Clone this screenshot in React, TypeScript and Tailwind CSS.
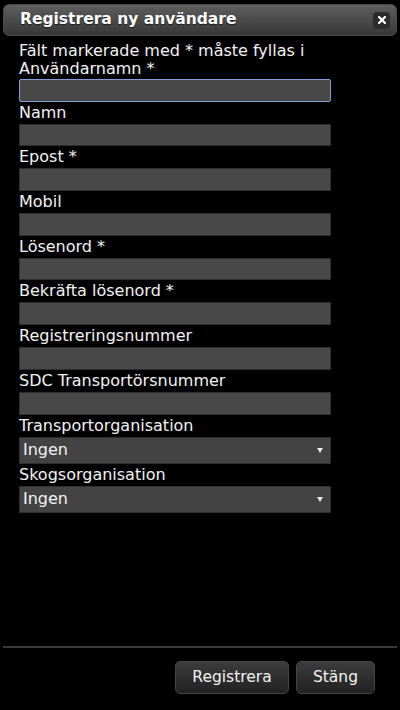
import React from "react";

const font = { fontFamily: '"DejaVu Sans", Verdana, sans-serif' };

function Label({ text, first }: { text: string; first?: boolean }) {
  return (
    <div
      className={`text-[16px] leading-[17px] text-[#f2f2f2] ${first ? "pb-[2px]" : "pt-[2px] pb-[3px]"}`}
    >
      {text}
    </div>
  );
}

function Input({ focused }: { focused?: boolean }) {
  return (
    <div
      className={`h-[22.7px] w-[312px] bg-[#484848] border ${
        focused ? "border-[#7f9fd6] rounded-[2px]" : "border-[#2e2e2e]"
      }`}
    />
  );
}

function Select() {
  return (
    <div className="h-[27px] w-[312px] bg-[#434343] border border-[#2e2e2e] flex items-center justify-between pl-[3px] pr-[7px]">
      <span className="text-[16px] text-[#f2f2f2]">Ingen</span>
      <svg width="6" height="5" viewBox="0 0 6 5">
        <polygon points="0,0 6,0 3,5" fill="#e8e8e8" />
      </svg>
    </div>
  );
}

export default function App() {
  const fields: { label: string }[] = [
    { label: "Namn" },
    { label: "Epost *" },
    { label: "Mobil" },
    { label: "Lösenord *" },
    { label: "Bekräfta lösenord *" },
    { label: "Registreringsnummer" },
    { label: "SDC Transportörsnummer" },
  ];
  return (
    <div className="w-[400px] h-[710px] bg-black flex flex-col overflow-hidden" style={font}>
      <div className="mx-[3px] mt-[4px] h-[32px] rounded-[6px] bg-gradient-to-b from-[#5e5e5e] to-[#383838] border border-[#4a4a4a] flex items-center justify-between pl-[16px] pr-[6px]">
        <span className="text-[15.5px] font-bold text-white [text-shadow:0_1px_1px_rgba(0,0,0,0.6)]">
          Registrera ny användare
        </span>
        <div className="w-[17px] h-[17px] rounded-[4px] bg-[#2c2c2c] flex items-center justify-center">
          <svg width="8" height="8" viewBox="0 0 8 8">
            <path d="M1 1 L7 7 M7 1 L1 7" stroke="#ffffff" strokeWidth="2.2" strokeLinecap="square" />
          </svg>
        </div>
      </div>

      <div className="flex-1 px-[19px] pt-[6px]">
        <div className="text-[16px] leading-[18px] text-[#f2f2f2]">Fält markerade med * måste fyllas i</div>
        <Label text="Användarnamn *" first />
        <Input focused />
        {fields.map((f) => (
          <div key={f.label}>
            <Label text={f.label} />
            <Input />
          </div>
        ))}
        <Label text="Transportorganisation" />
        <Select />
        <Label text="Skogsorganisation" />
        <Select />
      </div>

      <div className="mx-[3px] h-[2px] bg-[#3a3a3a]" />
      <div className="flex justify-end gap-[7px] pt-[13px] pb-[16px] pr-[25px]">
        <button className="w-[114px] h-[33px] rounded-[5px] bg-gradient-to-b from-[#3c3c3c] to-[#222222] border border-[#444] text-[15.5px] text-[#f2f2f2]">
          Registrera
        </button>
        <button className="w-[79px] h-[33px] rounded-[5px] bg-gradient-to-b from-[#3c3c3c] to-[#222222] border border-[#444] text-[15.5px] text-[#f2f2f2]">
          Stäng
        </button>
      </div>
    </div>
  );
}
